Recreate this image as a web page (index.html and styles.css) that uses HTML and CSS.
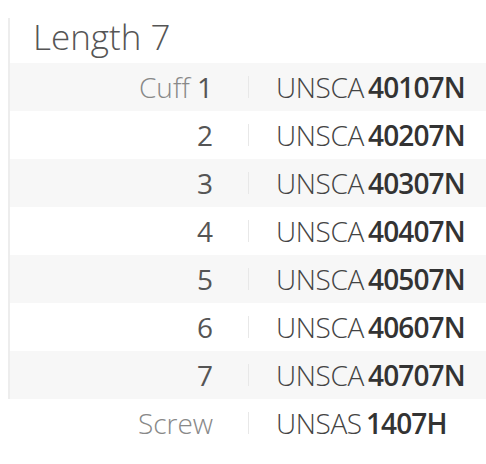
FILE: index.html
```html
<!DOCTYPE html>
<html>
<head>
<meta charset="utf-8">
<link rel="stylesheet" href="styles.css">
</head>
<body>
<div class="panel">
  <h1 class="title">Length 7</h1>
  <div class="rows">
    <div class="row shade"><div class="label"><span class="muted">Cuff</span> 1</div><div class="sep"></div><div class="value"><span class="pre">UNSCA</span> <b>40107N</b></div></div>
    <div class="row"><div class="label">2</div><div class="sep"></div><div class="value"><span class="pre">UNSCA</span> <b>40207N</b></div></div>
    <div class="row shade"><div class="label">3</div><div class="sep"></div><div class="value"><span class="pre">UNSCA</span> <b>40307N</b></div></div>
    <div class="row"><div class="label">4</div><div class="sep"></div><div class="value"><span class="pre">UNSCA</span> <b>40407N</b></div></div>
    <div class="row shade"><div class="label">5</div><div class="sep"></div><div class="value"><span class="pre">UNSCA</span> <b>40507N</b></div></div>
    <div class="row"><div class="label">6</div><div class="sep"></div><div class="value"><span class="pre">UNSCA</span> <b>40607N</b></div></div>
    <div class="row shade"><div class="label">7</div><div class="sep"></div><div class="value"><span class="pre">UNSCA</span> <b>40707N</b></div></div>
  </div>
</div>
<div class="row screw"><div class="label"><span class="muted">Screw</span></div><div class="sep"></div><div class="value"><span class="pre">UNSAS</span> <b>1407H</b></div></div>
</body>
</html>
```
FILE: styles.css
```css
html, body {
  margin: 0;
  padding: 0;
  background: #fff;
  font-family: "Open Sans", "Liberation Sans", sans-serif;
  color: #555;
}
.panel {
  margin: 18px 0 0 8px;
  border-left: 2px solid #ededed;
}
.title {
  margin: 0;
  padding: 0 0 0 23px;
  height: 45px;
  font-size: 35px;
  line-height: 45px;
  font-weight: 300;
  color: #555;
  position: relative;
  top: -4px;
}
.row {
  display: grid;
  grid-template-columns: 203px 63px 1fr;
  height: 48px;
  align-items: center;
  font-size: 28px;
}
.screw {
  margin-left: 10px;
}
.shade {
  background: #f7f7f7;
}
.label {
  text-align: right;
  font-weight: 400;
  color: #555;
}
.muted {
  font-weight: 300;
  color: #888;
}
.sep {
  justify-self: start;
  margin-left: 35px;
  width: 1px;
  height: 22px;
  background: #e8e8e8;
}
.value {
  white-space: nowrap;
  word-spacing: -3px;
}
.pre {
  font-weight: 300;
  color: #444;
  letter-spacing: -0.4px;
}
.value b {
  font-weight: 600;
  color: #333;
  letter-spacing: -0.9px;
}
```
